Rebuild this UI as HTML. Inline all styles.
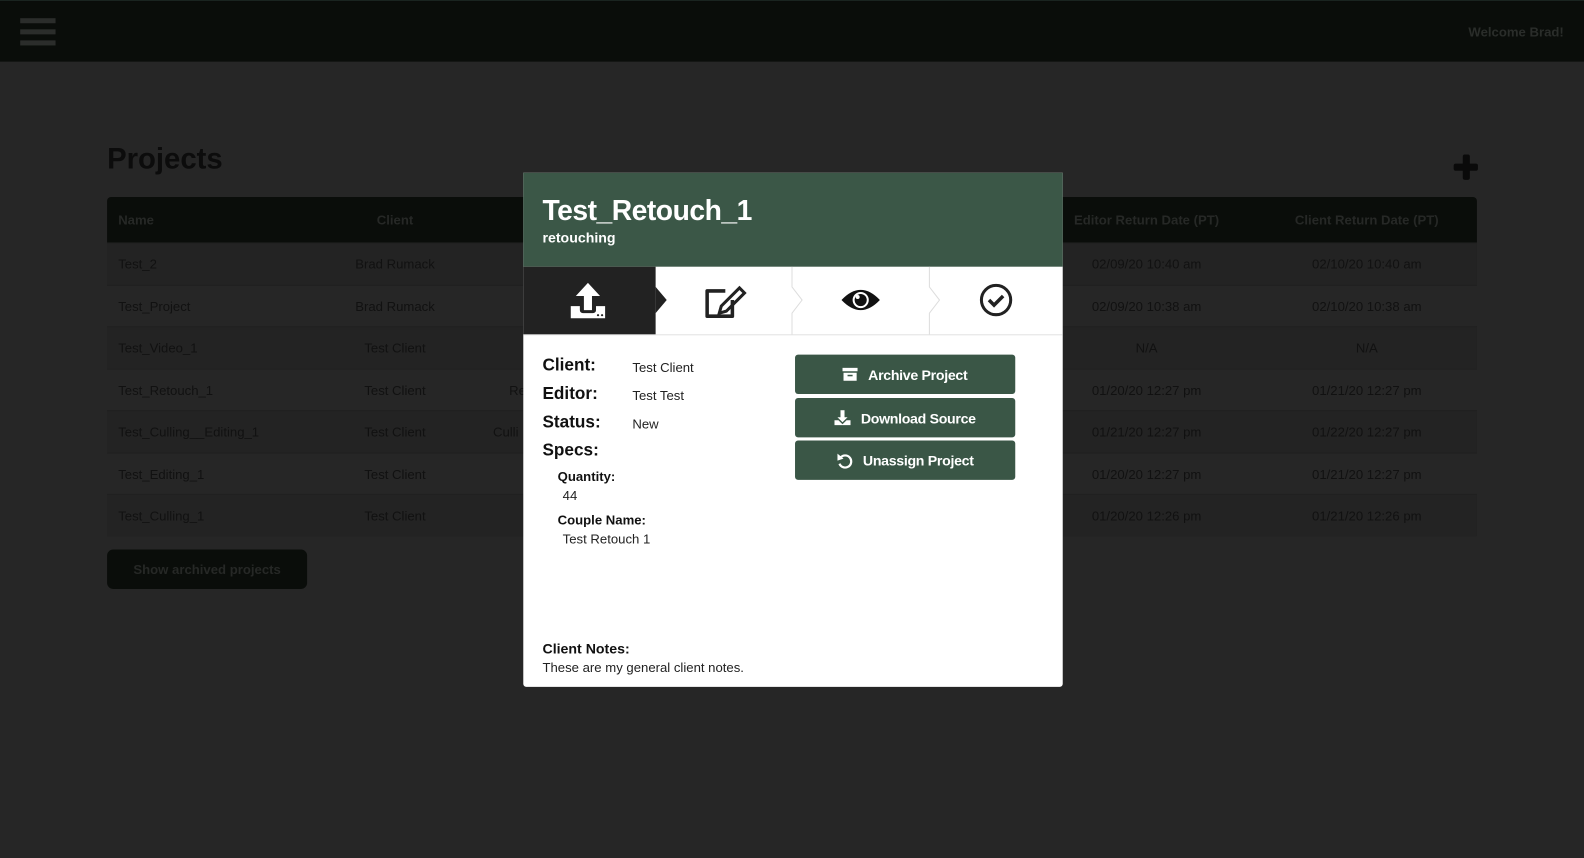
<!DOCTYPE html>
<html><head><meta charset="utf-8"><style>
*{margin:0;padding:0;box-sizing:border-box}
html,body{width:1584px;height:858px;overflow:hidden;background:#262626}
#w{width:1568px;height:850px;position:relative;transform:scale(1.0102);transform-origin:0 0;font-family:"Liberation Sans",sans-serif;color:#111}
.a{position:absolute;white-space:nowrap}
.top{left:0;top:0;width:1568px;height:61px;background:#0a0d0a;border-top:1px solid #1a2420}
.bar{left:20px;width:35px;height:5px;background:#2b2d2b}
.row{left:106px;width:1356px;height:41.5px;border-top:1px solid #202020;font-size:13px;line-height:41px}
.row span{position:absolute;white-space:nowrap}
.c{transform:translateX(-50%)}
.btn{left:787px;width:218px;height:39px;background:#3a5646;border-radius:3px;color:#fff;font-weight:bold;font-size:14px;display:flex;align-items:center;justify-content:center;gap:10px;letter-spacing:-0.3px}
.lbl{font-weight:bold;font-size:17px;color:#111}
.val{font-size:13px;color:#222}
</style></head><body><div id="w">
<div class="a top"></div>
<div class="a bar" style="top:18px"></div><div class="a bar" style="top:29px"></div><div class="a bar" style="top:40px"></div>
<div class="a" style="right:20px;top:24px;font-size:13px;font-weight:bold;color:#2a2d2a">Welcome Brad!</div>
<div class="a" style="left:106px;top:142px;font-size:29px;font-weight:bold;color:#0c0c0c">Projects</div>
<div class="a" style="left:1439px;top:162px;width:24px;height:7px;background:#0a0a0a;border-radius:2px"></div>
<div class="a" style="left:1448px;top:153px;width:7px;height:25px;background:#0a0a0a;border-radius:2px"></div>
<div class="a" style="left:106px;top:195px;width:1356px;height:45px;background:#0a0d0a;border-radius:4px 4px 0 0;font-size:13px;font-weight:bold;color:#262826;line-height:45px">
<span class="a" style="left:11px">Name</span><span class="a c" style="left:285px">Client</span><span class="a c" style="left:1029px">Editor Return Date (PT)</span><span class="a c" style="left:1247px">Client Return Date (PT)</span></div>
<div class="a row" style="top:240px;background:#232323"><span style="left:11px">Test_2</span><span class="c" style="left:285px">Brad Rumack</span><span class="c" style="left:1029px">02/09/20 10:40 am</span><span class="c" style="left:1247px">02/10/20 10:40 am</span></div>
<div class="a row" style="top:281.5px"><span style="left:11px">Test_Project</span><span class="c" style="left:285px">Brad Rumack</span><span class="c" style="left:1029px">02/09/20 10:38 am</span><span class="c" style="left:1247px">02/10/20 10:38 am</span></div>
<div class="a row" style="top:323px;background:#232323"><span style="left:11px">Test_Video_1</span><span class="c" style="left:285px">Test Client</span><span class="c" style="left:1029px">N/A</span><span class="c" style="left:1247px">N/A</span></div>
<div class="a row" style="top:364.5px"><span style="left:11px">Test_Retouch_1</span><span class="c" style="left:285px">Test Client</span><span style="left:398px">Re</span><span class="c" style="left:1029px">01/20/20 12:27 pm</span><span class="c" style="left:1247px">01/21/20 12:27 pm</span></div>
<div class="a row" style="top:406px;background:#232323"><span style="left:11px">Test_Culling__Editing_1</span><span class="c" style="left:285px">Test Client</span><span style="left:382px">Culli</span><span class="c" style="left:1029px">01/21/20 12:27 pm</span><span class="c" style="left:1247px">01/22/20 12:27 pm</span></div>
<div class="a row" style="top:447.5px"><span style="left:11px">Test_Editing_1</span><span class="c" style="left:285px">Test Client</span><span class="c" style="left:1029px">01/20/20 12:27 pm</span><span class="c" style="left:1247px">01/21/20 12:27 pm</span></div>
<div class="a row" style="top:489px;background:#232323"><span style="left:11px">Test_Culling_1</span><span class="c" style="left:285px">Test Client</span><span class="c" style="left:1029px">01/20/20 12:26 pm</span><span class="c" style="left:1247px">01/21/20 12:26 pm</span></div>
<div class="a" style="left:106px;top:544px;width:198px;height:39px;background:#0a0d0a;border-radius:6px;color:#262826;font-size:13px;font-weight:bold;text-align:center;line-height:39px">Show archived projects</div>

<div class="a" style="left:518px;top:171px;width:534px;height:509px;background:#fff;border-radius:0 0 3px 3px">
<div class="a" style="left:0;top:0;width:534px;height:93px;background:#3b5747"></div>
<div class="a" style="left:19px;top:22px;font-size:28px;font-weight:bold;color:#fff;letter-spacing:-0.5px">Test_Retouch_1</div>
<div class="a" style="left:19px;top:56px;font-size:14px;font-weight:bold;color:#fff">retouching</div>
<div class="a" style="left:0;top:93px;width:131px;height:67px;background:#222"></div>
<svg class="a" style="left:0;top:93px" width="534" height="68">
<polygon points="131,20 142,33 131,46" fill="#222"/>
<polyline points="266,0 266,20 276,33 266,46 266,67" fill="none" stroke="#ddd"/>
<polyline points="402,0 402,20 412,33 402,46 402,67" fill="none" stroke="#ddd"/>
<line x1="0" y1="67.5" x2="534" y2="67.5" stroke="#ddd"/>
<g fill="#fff"><polygon points="64,16 52,29 60,29 60,43 68,43 68,29 76,29"/>
<path d="M47,39 h9 v4 a3,3 0 0 0 3,3 h10 a3,3 0 0 0 3,-3 v-4 h9 v12 h-34z"/></g>
<circle cx="74" cy="48" r="1.1" fill="#222"/><circle cx="78" cy="48" r="1.1" fill="#222"/>
<g fill="none" stroke="#222" stroke-width="3.5" stroke-linejoin="round">
<path d="M200,24 h-18 v25 h25 v-16"/></g>
<path d="M196,39 l18,-18 l5,5 l-18,18 l-7,2z" fill="none" stroke="#222" stroke-width="3"/>
<path d="M315,33 q19,-20 38,0 q-19,20 -38,0z" fill="#111"/>
<circle cx="334" cy="33" r="8" fill="#fff"/><circle cx="334" cy="33" r="6" fill="#111"/><circle cx="331" cy="30" r="2" fill="#fff"/>
<circle cx="468" cy="33" r="14.5" fill="none" stroke="#222" stroke-width="3"/>
<path d="M461,33 l5,5 l9,-9" fill="none" stroke="#222" stroke-width="3.5"/>
</svg>
<div class="a lbl" style="left:19px;top:181px">Client:</div><div class="a val" style="left:108px;top:185px">Test Client</div>
<div class="a lbl" style="left:19px;top:209px">Editor:</div><div class="a val" style="left:108px;top:213px">Test Test</div>
<div class="a lbl" style="left:19px;top:237px">Status:</div><div class="a val" style="left:108px;top:241px">New</div>
<div class="a lbl" style="left:19px;top:265px">Specs:</div>
<div class="a" style="left:34px;top:293px;font-size:13px;font-weight:bold">Quantity:</div>
<div class="a val" style="left:39px;top:312px">44</div>
<div class="a" style="left:34px;top:336px;font-size:13px;font-weight:bold">Couple Name:</div>
<div class="a val" style="left:39px;top:355px">Test Retouch 1</div>
<div class="a" style="left:19px;top:463px;font-size:14px;font-weight:bold">Client Notes:</div>
<div class="a val" style="left:19px;top:482px">These are my general client notes.</div>
</div>
<div class="a btn" style="top:351px"><svg width="15" height="13"><rect x="0" y="0" width="15" height="3.5" fill="#fff"/><rect x="1" y="5" width="13" height="8" fill="#fff"/><rect x="5" y="7" width="5" height="1.5" fill="#3a5646"/></svg>Archive Project</div>
<div class="a btn" style="top:394px"><svg width="16" height="15"><polygon points="8,12 3,7 6,7 6,0 10,0 10,7 13,7" fill="#fff"/><path d="M0,10 h4 l4,4 l4,-4 h4 v5 h-16z" fill="#fff"/></svg>Download Source</div>
<div class="a btn" style="top:436px"><svg width="16" height="16"><path d="M4,5 A6,6 0 1 1 3,11" fill="none" stroke="#fff" stroke-width="2.2"/><polygon points="1,1 7,6 1,8" fill="#fff"/></svg>Unassign Project</div>
</div></body></html>
